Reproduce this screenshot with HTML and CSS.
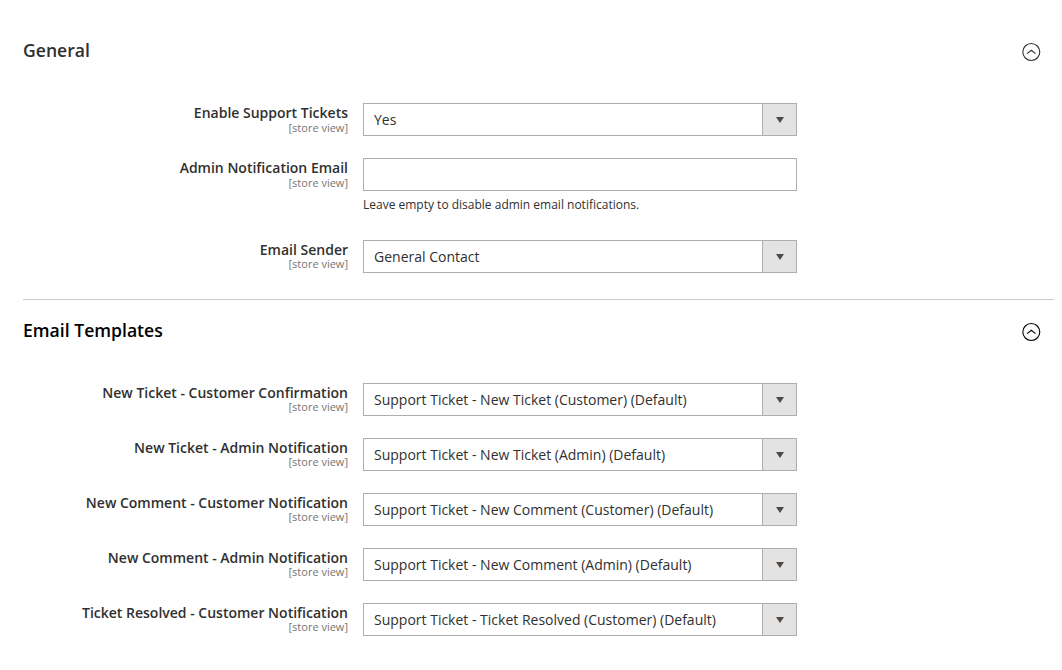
FILE: index.html
```
<!DOCTYPE html>
<html lang="en">
<head>
  <meta charset="UTF-8">
  <meta name="viewport" content="width=device-width, initial-scale=1">
  <title>Support Tickets Configuration</title>
  <link rel="stylesheet" href="styles.css">
</head>
<body>
  <main class="config">
    <section class="section">
      <header class="section-header">
        <h2>General</h2>
        <svg class="toggle" viewBox="0 0 20 20" aria-hidden="true">
          <circle cx="10.3" cy="10" r="8.5"/>
          <path d="M6.1 11.6 L10.3 8.2 L14.5 11.6"/>
        </svg>
      </header>
      <div class="field">
        <div class="label"><label>Enable Support Tickets</label><span class="scope">[store view]</span></div>
        <div class="control"><div class="select"><span>Yes</span><i class="arrow"></i></div></div>
      </div>
      <div class="field">
        <div class="label"><label for="admin-email">Admin Notification Email</label><span class="scope">[store view]</span></div>
        <div class="control">
          <input type="text" id="admin-email" class="input-text">
          <p class="note">Leave empty to disable admin email notifications.</p>
        </div>
      </div>
      <div class="field field-compact">
        <div class="label"><label>Email Sender</label><span class="scope">[store view]</span></div>
        <div class="control"><div class="select"><span>General Contact</span><i class="arrow"></i></div></div>
      </div>
    </section>

    <section class="section section-templates">
      <header class="section-header">
        <h2>Email Templates</h2>
        <svg class="toggle" viewBox="0 0 20 20" aria-hidden="true">
          <circle cx="10.3" cy="10" r="8.5"/>
          <path d="M6.1 11.6 L10.3 8.2 L14.5 11.6"/>
        </svg>
      </header>
      <div class="field field-compact">
        <div class="label"><label>New Ticket - Customer Confirmation</label><span class="scope">[store view]</span></div>
        <div class="control"><div class="select"><span>Support Ticket - New Ticket (Customer) (Default)</span><i class="arrow"></i></div></div>
      </div>
      <div class="field field-compact">
        <div class="label"><label>New Ticket - Admin Notification</label><span class="scope">[store view]</span></div>
        <div class="control"><div class="select"><span>Support Ticket - New Ticket (Admin) (Default)</span><i class="arrow"></i></div></div>
      </div>
      <div class="field field-compact">
        <div class="label"><label>New Comment - Customer Notification</label><span class="scope">[store view]</span></div>
        <div class="control"><div class="select"><span>Support Ticket - New Comment (Customer) (Default)</span><i class="arrow"></i></div></div>
      </div>
      <div class="field field-compact">
        <div class="label"><label>New Comment - Admin Notification</label><span class="scope">[store view]</span></div>
        <div class="control"><div class="select"><span>Support Ticket - New Comment (Admin) (Default)</span><i class="arrow"></i></div></div>
      </div>
      <div class="field field-compact">
        <div class="label"><label>Ticket Resolved - Customer Notification</label><span class="scope">[store view]</span></div>
        <div class="control"><div class="select"><span>Support Ticket - Ticket Resolved (Customer) (Default)</span><i class="arrow"></i></div></div>
      </div>
    </section>
  </main>
</body>
</html>
```
FILE: styles.css
```
* {
  box-sizing: border-box;
}
body {
  margin: 0;
  background: #fff;
  color: #303030;
  font-family: "Open Sans", "Noto Sans", sans-serif;
  font-size: 14px;
}
.config {
  padding: 20px 8px 0 23px;
}
.section {
  height: 280px;
  border-bottom: 1px solid #ccc;
}
.section-templates {
  height: auto;
  border-bottom: none;
}
.section-templates h2 {
  color: #000;
}
.section-templates .toggle {
  stroke: #000;
}
.section-header {
  display: flex;
  justify-content: space-between;
  align-items: center;
  height: 63px;
  margin-bottom: 20px;
  padding-right: 13px;
}
h2 {
  margin: 0;
  padding-bottom: 3px;
  font-size: 17.6px;
  font-weight: 600;
  line-height: 24px;
}
.toggle {
  width: 20px;
  height: 20px;
  fill: none;
  stroke: #303030;
  stroke-width: 1.1;
}
.field {
  display: flex;
  gap: 15px;
  margin-bottom: 22px;
}
.label {
  width: 325px;
  text-align: right;
}
.label label {
  display: block;
  font-weight: 600;
  line-height: 19px;
}
.scope {
  display: block;
  color: #757575;
  font-size: 11px;
  line-height: 12px;
}
.field-compact .scope {
  margin-top: -1px;
}
.control {
  width: 434px;
}
.select {
  display: flex;
  height: 33px;
  border: 1px solid #adadad;
}
.select span {
  flex: 1;
  padding-left: 10px;
  line-height: 32px;
}
.arrow {
  display: flex;
  align-items: center;
  justify-content: center;
  width: 34px;
  background: #e3e3e3;
  border-left: 1px solid #adadad;
}
.arrow::after {
  content: "";
  border: 4px solid transparent;
  border-top: 6px solid #514943;
  border-bottom: none;
}
.input-text {
  display: block;
  width: 100%;
  height: 33px;
  padding: 0 10px;
  border: 1px solid #adadad;
  font: inherit;
}
.note {
  margin: 5px 0 27px;
  font-size: 12px;
  line-height: 17px;
}
.field:has(.note) {
  margin-bottom: 0;
}
```
